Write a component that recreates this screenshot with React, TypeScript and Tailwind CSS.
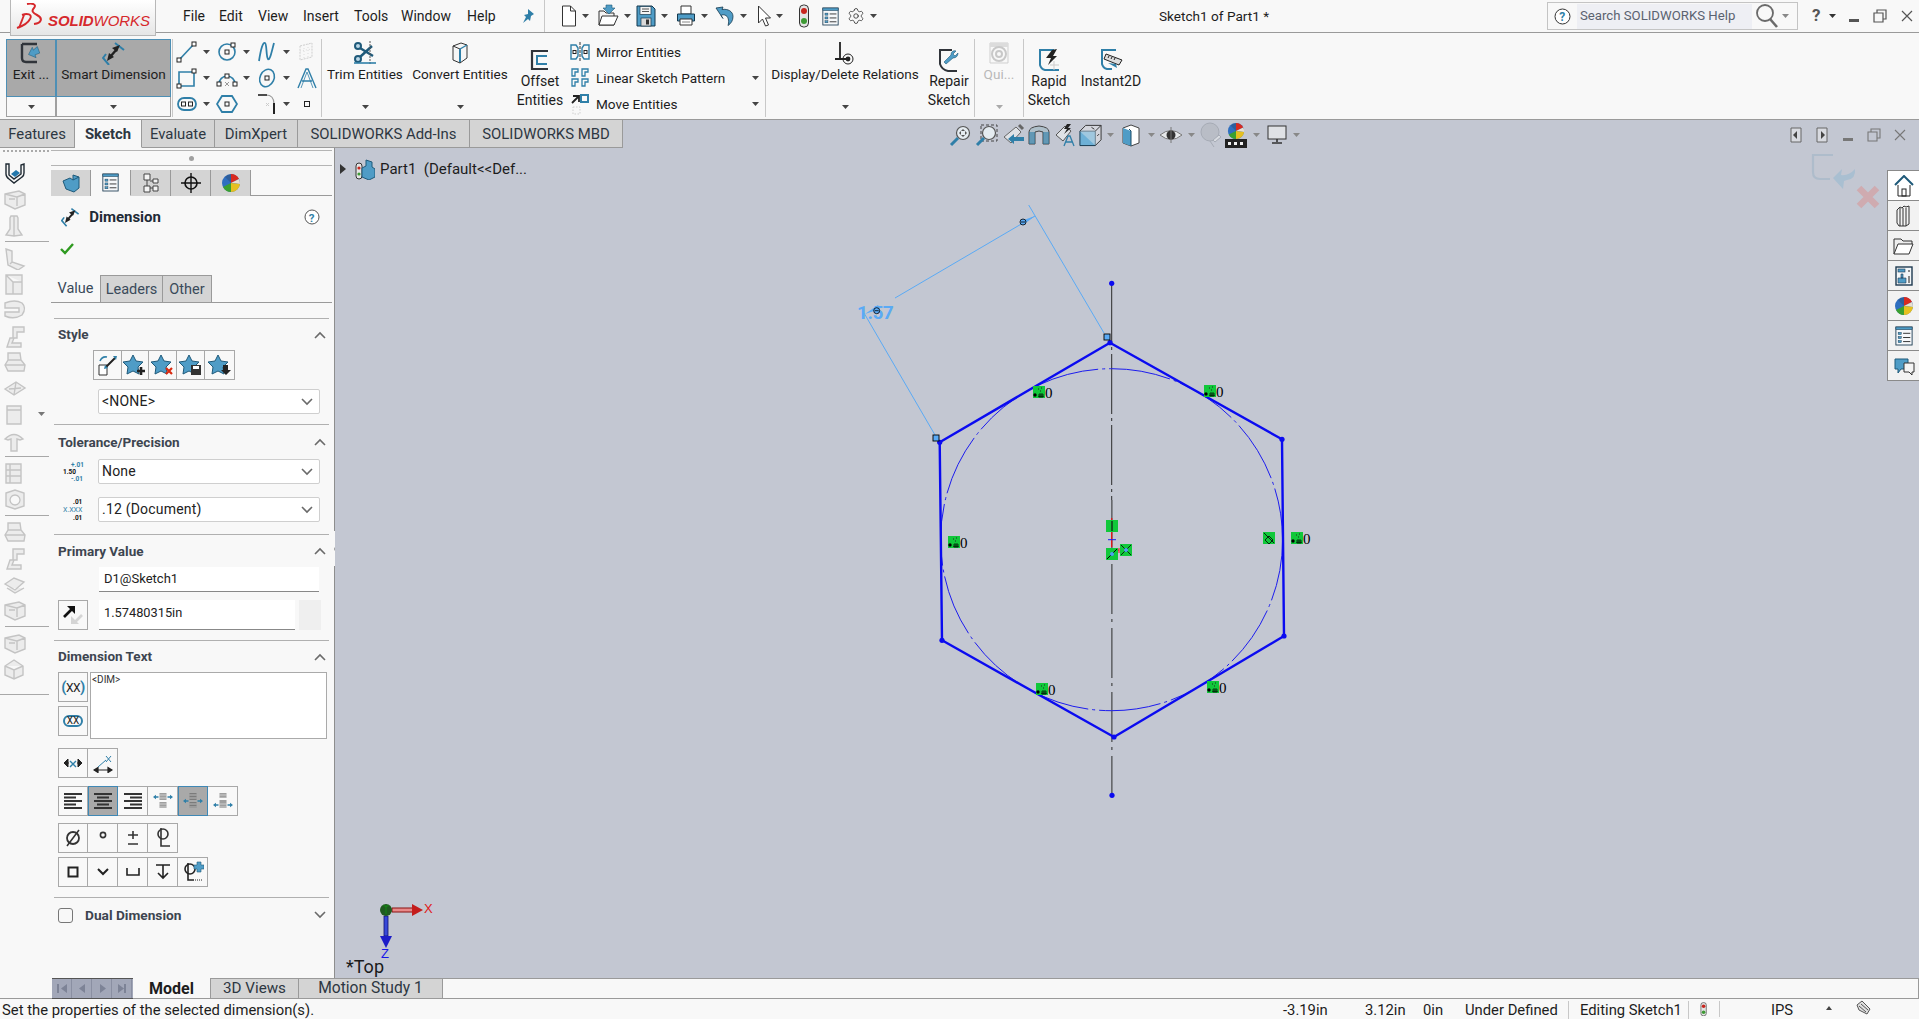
import React from "react";
import { Settings } from "lucide-react";

type SP = { w?: number; h?: number; children?: React.ReactNode; className?: string };
const S = ({ w = 24, h = 24, children, className }: SP) => (
  <svg width={w} height={h} viewBox={`0 0 ${w} ${h}`} fill="none" className={className}>{children}</svg>
);
const B = "#2f7fa8", LB = "#4f9cc6";
const Caret = ({ c = "#444" }: { c?: string }) => <S w={7} h={4}><path d="M0 0h7L3.5 4z" fill={c} /></S>;
const Chevron = ({ up = false }: { up?: boolean }) => (
  <S w={12} h={8}><path d={up ? "M1 7l5-5 5 5" : "M1 1l5 5 5-5"} stroke="#6a6a6a" strokeWidth="1.6" /></S>
);
const Ball = ({ s = 20 }: { s?: number }) => (
  <svg width={s} height={s} viewBox="0 0 20 20">
    <circle cx="10" cy="10" r="9" fill="#2f6fc0" />
    <path d="M10 1a9 9 0 0 1 8 5l-8 4z" fill="#d82a20" />
    <path d="M18 6a9 9 0 0 1 1 5l-9-1z" fill="#e8e0d0" />
    <path d="M19 11a9 9 0 0 1-9 8v-9z" fill="#e6c020" />
    <path d="M10 19a9 9 0 0 1-8-5l8-4z" fill="#3aa030" />
    <path d="M10 1a9 9 0 0 0-6 3l6 6z" fill="#2a2a2a" opacity=".25" />
  </svg>
);
const Traffic = ({ s = 1 }: { s?: number }) => (
  <svg width={12 * s} height={24 * s} viewBox="0 0 12 24">
    <rect x="1.5" y="1" width="9" height="22" rx="4" fill="#e4e4e4" stroke="#333" />
    <circle cx="6" cy="7" r="3" fill="#c8261e" />
    <circle cx="6" cy="17" r="3" fill="#3d9a34" />
  </svg>
);
const ListIc = ({ s = 20 }: { s?: number }) => (
  <svg width={s} height={s + 2} viewBox="0 0 20 22" fill="none">
    <rect x="1" y="1" width="18" height="20" fill="#f6f8fa" stroke="#1b3a50" />
    <rect x="1" y="1" width="18" height="3" fill={LB} stroke="#1b3a50" strokeWidth=".6" />
    <rect x="3.5" y="7" width="3.5" height="2.4" fill={LB} stroke="#1b3a50" strokeWidth=".5" />
    <rect x="3.5" y="11.5" width="3.5" height="2.4" fill={LB} stroke="#1b3a50" strokeWidth=".5" />
    <rect x="3.5" y="16" width="3.5" height="2.4" fill={LB} stroke="#1b3a50" strokeWidth=".5" />
    <path d="M9 8h8M9 12.7h8M9 17.2h8" stroke="#222" />
  </svg>
);

/* ---------- logo ---------- */
const DsLogo = () => (
  <S w={29} h={27}>
    <path d="M6 12C11 10 17 11 14 16 12 20 7 23 1 25" stroke="#d6282c" strokeWidth="1.9" />
    <path d="M8 12L3 25" stroke="#d6282c" strokeWidth="1.9" />
    <path d="M11 1C16 0 21 1 18 5 15 8 17 10 21 12 27 15 26 20 18 21" stroke="#d6282c" strokeWidth="2" />
  </S>
);

/* ---------- quick access toolbar ---------- */
const NewIc = () => <S w={16} h={24}><path d="M1.5 2h8l5 5v15h-13z" fill="#fff" stroke="#333" /><path d="M9.5 2v5h5" stroke="#333" /></S>;
const OpenIc = () => <S w={22} h={24}><path d="M2 21V7h5l2 2h8v12z" fill="#f4f4f4" stroke="#333" /><path d="M2 21l3-9h16l-4 9z" fill="#fff" stroke="#333" /><path d="M9 1l6 0v3h3l-6 6-6-6h3z" fill={LB} stroke="#1f5a7a" strokeWidth=".6" /></S>;
const SaveIc = () => <S w={20} h={22}><path d="M1 1h15l3 3v17H1z" fill={LB} stroke="#14384e" /><rect x="4" y="1.5" width="11" height="8" fill="#f4f4f4" stroke="#14384e" strokeWidth=".7" /><path d="M6 4h7M6 6.5h7" stroke="#555" /><rect x="5" y="13" width="10" height="8" fill="#d9d9d9" stroke="#14384e" strokeWidth=".7" /><rect x="10" y="14.5" width="3" height="5" fill="#333" /></S>;
const PrintIc = () => <S w={20} h={22}><path d="M5 1h10v8H5z" fill="#fff" stroke="#333" /><path d="M1.5 9h17v7h-17z" fill={LB} stroke="#14384e" /><path d="M4 14h12v6H4z" fill="#fff" stroke="#333" /><path d="M6 17h8" stroke="#888" /></S>;
const UndoIc = () => <S w={20} h={22}><path d="M1 3l7-1-1 2.5c6-1 11 2 11 7 0 4-2 7-5 9 1-3 1-8-2-10-2-1-4-1-5 0l2 3z" fill={LB} stroke="#14384e" strokeWidth=".8" /></S>;
const CursorIc = () => <S w={14} h={22}><path d="M1.5 1v17l4-4 3 7 3-1-3-7h5z" fill="#fff" stroke="#333" /></S>;

/* ---------- command manager icons ---------- */
const ExitIc = () => <S w={22} h={24}><path d="M2 3h15M2 3v14q0 4 4 4h11" stroke="#30343a" strokeWidth="2.4" /><path d="M19 7v7h-5v3l-6-5.5L14 6v3z" fill={LB} stroke="#1f5a7a" strokeWidth=".5" transform="rotate(-20 14 11)" /></S>;
const SmartDim = ({ s = 1 }: { s?: number }) => (
  <svg width={24 * s} height={24 * s} viewBox="0 0 24 24" fill="none">
    <path d="M4 13l-3 4 6 7M13 2l9 7" stroke={B} strokeWidth="2" />
    <path d="M8 16l7-8" stroke="#222" strokeWidth="2.4" />
    <path d="M5 20l2-8 5 4zM18 4l-8 3 5 4z" fill="#222" />
  </svg>
);
const LineIc = () => <S w={22} h={24}><path d="M3 20L18 4" stroke={B} strokeWidth="1.6" /><rect x="1" y="18" width="4" height="4" fill="#fff" stroke="#222" /><rect x="16" y="2" width="4" height="4" fill="#fff" stroke="#222" /></S>;
const CircleIc = () => <S w={22} h={24}><circle cx="11" cy="12" r="8" stroke={B} strokeWidth="1.6" /><rect x="9" y="10" width="4" height="4" stroke="#222" /><rect x="15" y="3" width="4" height="4" fill="#fff" stroke="#222" /></S>;
const SplineIc = () => <S w={22} h={24}><path d="M3 21C5 8 7 2 9 3s1 14 3 16S16 10 18 3" stroke={B} strokeWidth="1.8" /></S>;
const GhostIc = () => <S w={22} h={24}><path d="M4 6l12-3v14L4 20z" stroke="#cfcfcf" strokeDasharray="2 1" /><path d="M8 5v14M12 4v14M4 11l12-2" stroke="#dcdcdc" strokeDasharray="1 2" /></S>;
const RectIc = () => <S w={22} h={24}><path d="M3 6h15v14H3z" stroke={B} strokeWidth="1.6" /><rect x="16" y="3" width="4" height="4" fill="#fff" stroke="#222" /><rect x="1" y="18" width="4" height="4" fill="#fff" stroke="#222" /></S>;
const ArcIc = () => <S w={22} h={24}><path d="M3 18a8 8 0 0 1 16 0" stroke={B} strokeWidth="1.6" /><rect x="1" y="16" width="4" height="4" fill="#fff" stroke="#222" /><rect x="17" y="16" width="4" height="4" fill="#fff" stroke="#222" /><rect x="9" y="8" width="4" height="4" fill="#fff" stroke="#222" /><path d="M9 16l4 4M13 16l-4 4" stroke="#999" /></S>;
const EllipseIc = () => <S w={22} h={24}><ellipse cx="11" cy="12" rx="7" ry="9" stroke={B} strokeWidth="1.6" transform="rotate(25 11 12)" /><rect x="9" y="10" width="4" height="4" stroke="#222" /></S>;
const TextIc = () => <S w={22} h={24}><path d="M2 22L10 3h2l8 19M6 15h10" stroke={B} strokeWidth="1.4" /><path d="M5 22L11 6l6 16" stroke={B} strokeWidth=".8" /></S>;
const SlotIc = () => <S w={22} h={24}><rect x="2" y="6" width="18" height="12" rx="6" stroke={B} strokeWidth="1.8" /><rect x="5.5" y="10" width="4" height="4" stroke="#222" /><rect x="12.5" y="10" width="4" height="4" stroke="#222" /></S>;
const PolyIc = () => <S w={22} h={24}><path d="M6 4h10l5 8-5 8H6l-5-8z" stroke={B} strokeWidth="1.8" /><rect x="9" y="10" width="4" height="4" stroke="#222" /></S>;
const FilletIc = () => <S w={22} h={24}><path d="M2 3h8q8 0 8 9" stroke="#999" strokeWidth="1.2" /><path d="M18 11v11" stroke="#222" strokeWidth="2" /><path d="M2 3h9" stroke="#222" strokeWidth="1.5" /><path d="M10 11l3 3M13 11l-3 3" stroke="#ccc" /></S>;
const TrimIc = () => <S w={24} h={26}><circle cx="5" cy="6" r="3" stroke="#1f5a7a" strokeWidth="2" fill="#bcd8e8" /><circle cx="5" cy="19" r="3" stroke="#1f5a7a" strokeWidth="2" fill="#bcd8e8" /><path d="M7 8l13 8M7 17L19 6" stroke="#1f5a7a" strokeWidth="2.4" /><path d="M17 1v24" stroke="#555" strokeDasharray="2 1" /><path d="M1 23h22" stroke={B} strokeWidth="1.6" /></S>;
const ConvertIc = () => <S w={20} h={24}><path d="M3 5l8-3 6 2v13l-7 5-7-3z" fill="#f6f6f6" stroke="#333" /><path d="M3 5l7 3v14" stroke="#333" /><path d="M10 8l7-4" stroke={B} strokeWidth="1.4" /><path d="M10 8v13" stroke={B} strokeWidth="2" /></S>;
const OffsetIc = () => <S w={20} h={24}><path d="M18 3H2v18h16" stroke="#30343a" strokeWidth="2.2" /><path d="M17 8H7v8h10" stroke={B} strokeWidth="2" /></S>;
const MirrorIc = () => <S w={20} h={20}><path d="M10 0v20" stroke="#333" strokeDasharray="3 1" /><path d="M1 3h5l2 3v8l-2 3H1zM19 3h-5l-2 3v8l2 3h5z" stroke={B} strokeWidth="1.4" /><rect x="3" y="8.5" width="3" height="3" fill="#fff" stroke="#222" /><rect x="14" y="8.5" width="3" height="3" fill="#fff" stroke="#222" /></S>;
const LinearIc = () => <S w={20} h={20}><path d="M2 1h6v3H5v4H2zM12 1h6v3h-3v4h-3zM2 11h6v3H5v4H2zM12 11h6v3h-3v4h-3z" stroke={B} strokeWidth="1.3" /></S>;
const MoveIc = () => <S w={20} h={22}><path d="M2 10l6-6M3 3h6v6" stroke="#222" strokeWidth="1.8" /><rect x="11" y="2" width="7" height="7" stroke={B} strokeWidth="2" /><rect x="3" y="14" width="7" height="7" stroke="#cfcfcf" strokeDasharray="1.5 1.5" /></S>;
const DisplayIc = () => <S w={24} h={26}><path d="M7 2v17M2 19h13" stroke="#222" strokeWidth="1.8" /><circle cx="15" cy="19" r="5" stroke="#222" /><circle cx="15" cy="19" r="2.4" fill="#222" /></S>;
const RepairIc = () => <S w={24} h={26}><path d="M15 3H3v14q2 6 8 7h9" stroke="#30343a" strokeWidth="2" /><path d="M21 6l-3 3-2-2 3-3c-3-1-5 1-5 4L7 15l2 2 7-6c3 0 5-2 5-5z" fill={LB} stroke="#1f5a7a" strokeWidth=".6" /></S>;
const QuickIc = () => <S w={22} h={26}><path d="M2 3h18v20H2z" stroke="#cfcfcf" /><path d="M2 3h18v4H2z" fill="#dcdcdc" /><circle cx="11" cy="14" r="7" stroke="#c8c8c8" strokeWidth="2" /><circle cx="11" cy="14" r="3" stroke="#c8c8c8" strokeWidth="2" /></S>;
const RapidIc = () => <S w={24} h={26}><path d="M17 3H3v15q1 4 5 5h14" stroke={B} strokeWidth="2" /><path d="M15 3l5-1-4 7h4l-9 9 3-7H9z" fill="#222" /><path d="M13 18h9M17 14v9" stroke="#ccc" /></S>;
const InstantIc = () => <S w={24} h={26}><path d="M17 3H3v14q1 4 5 5h5" stroke={B} strokeWidth="2" /><path d="M7 7l16 6-3 5L5 12z" fill="#ddd" stroke="#222" /><path d="M10 9l-1 2M13 10l-1 2M16 11l-1 2" stroke="#222" /><path d="M9 16l9 5-1-4z" fill={B} /></S>;

/* ---------- heads-up toolbar ---------- */
const Mag = ({ dash }: { dash?: boolean }) => (
  <S w={24} h={24}>
    {dash && <rect x="6" y="2" width="16" height="16" stroke="#444" strokeDasharray="3 2" />}
    <circle cx="14" cy="10" r="6.5" fill="#e4ebf0" stroke="#555" strokeWidth="1.2" />
    {!dash && <path d="M14 6l2 2h-4zM14 14l2-2h-4zM10 10l2-2v4zM18 10l-2-2v4z" fill="#555" />}
    <path d="M9 15l-7 7" stroke={B} strokeWidth="3" />
  </S>
);
const PrevIc = () => <S w={24} h={24}><path d="M3 14L15 4l5 5-10 11z" fill="#dfe2e6" stroke="#666" /><path d="M18 2l4 4" stroke="#666" strokeWidth="3" /><path d="M23 18H13v3l-6-5 6-5v3h10z" fill={B} /></S>;
const SectIc = () => <S w={24} h={24}><path d="M2 9q0-5 10-6 10 1 10 6v12H16V9q-4-2-8 0v12H2z" fill="#aebfc9" stroke="#444" /><path d="M2 9h6v12H2zM16 9h6v12h-6z" fill={B} opacity=".6" /></S>;
const DynIc = () => <S w={24} h={24}><path d="M3 12L12 3l6 5-8 10z" fill="#dfe2e6" stroke="#555" /><path d="M14 1l-3 5h3l-3 5 7-6h-3l3-4z" fill="#222" /><path d="M11 23l4-10h2l4 10M13 19h6" stroke={B} strokeWidth="1.3" /></S>;
const CubeIc = () => <S w={26} h={24}><path d="M2 8h16v15H2z" fill="#6db0d6" stroke="#14384e" /><path d="M2 8l6-6h16v15l-6 6" stroke="#333" fill="#eee" fillOpacity=".4" /><path d="M18 8l6-6M14 4l3 2M20 13l2-2" stroke="#333" /></S>;
const DispIc = () => <S w={20} h={24}><path d="M2 5l8-3 8 3v15l-8 3-8-3z" fill="#fff" stroke="#444" /><path d="M2 5l8 3v15l-8-3z" fill="#4f9cc6" /><path d="M8 6l2 2v15" stroke="#1b4a66" /></S>;
const EyeIc = () => <S w={24} h={22}><path d="M1 11q11-9 22 0-11 9-22 0z" fill="#e6e8ea" stroke="#777" /><circle cx="12" cy="11" r="4.5" fill="#333" /><path d="M12 3v16" stroke="#777" /></S>;
const BalloonIc = () => <S w={24} h={26}><circle cx="11" cy="10" r="9" fill="#b9bdc6" stroke="#a6abb5" /><path d="M11 19l4 6" stroke="#a6abb5" /><path d="M14 18l6-5 2 2-6 5z" fill="#d8dbe0" stroke="#a6abb5" /></S>;
const SceneIc = () => (
  <S w={22} h={26}>
    <g transform="translate(2 0)"><Ball s={18} /></g>
    <path d="M0 17h22v9H0z" fill="#222" />
    <path d="M3 20h3v3H3zM9 20h3v3H9zM15 20h3v3h-3z" fill="#f2f2f2" />
  </S>
);
const Monitor = () => <S w={20} h={20}><rect x="1" y="1" width="18" height="13" fill="#dfe1e5" stroke="#333" /><path d="M10 14v3M5 18h10" stroke="#333" strokeWidth="1.6" /></S>;

/* ---------- left feature bar ---------- */
const gs = { stroke: "#c4c4c4", fill: "#ececec", strokeWidth: 1.4 };
const FP: Record<string, string> = {
  a: "M3 7l14-3 6 3v11l-10 4-10-5z M3 7l12 3v9 M7 12h6M15 10l8-3",
  b: "M9 3h6l1 2v11l4 6-8 1-8-1 4-6V5z M12 3v20",
  c: "M4 3l6 2v11l12 4-6 4-10-5z M10 16l-2 2",
  d: "M4 3h16v19H4z M4 3l7 7h9 M11 10v12",
  e: "M3 5q10-4 17 0q5 5 0 12q-8 5-17 1v-4h14v-4H3z",
  f: "M11 3h11v5h-7v6h-3l-2 5h9v4H5l3-9h3z",
  g: "M3 13l11-7 9 6-11 7z M7 13l12-1 M14 6l-2 13",
  h: "M6 3h12l1 7 4 5-1 6H6l-3-6 3-5z M6 10h13 M3 15h20",
  i: "M3 11q9-9 18 0l-3 1-3-1v12H9V11l-3 1z",
  j: "M4 3h15v19H4z M8 3v19M4 9h15M4 15h15",
  k: "M4 6l9-3 9 3v13l-9 3-9-3z M13 8a5 5 0 1 0 .01 0",
  l: "M3 12l9-6 10 4-9 8z M5 16l8 5 9-5",
  m: "M12 3l9 6v9l-9 4-9-4V9z M3 9l9 4 9-4 M12 13v9",
  n: "M5 4h14v18H5z M5 8h14",
};
const Feat = ({ k, first }: { k: string; first?: boolean }) =>
  first ? (
    <S w={24} h={24}>
      <path d="M3 3v10q0 3 3 5l5 4 8-6q2-1 2-4V3l-3 1v9l-7 5-5-4V3z" fill="#f6f6f6" stroke="#1f2a33" strokeWidth="1.4" />
      <path d="M13 9l4 3-5 4-4-3z" fill="#2478ac" />
    </S>
  ) : (
    <S w={26} h={24}><path d={FP[k]} {...gs} /></S>
  );
const lefts: (string | number)[] = ["a0", "a", "b", 0, "c", "d", "e", "f", "h", "g", "n", "i", 0, "j", "k", 0, "h", "f", "l", "a", 0, "a", "m", 0];

/* ---------- small blocks ---------- */
const Label = ({ t, lh = 19 }: { t: string[]; lh?: number }) => (
  <div className="text-center text-[14px]" style={{ lineHeight: lh + "px" }}>{t.map((x) => <div key={x} className="whitespace-nowrap">{x}</div>)}</div>
);
const Big1 = ({ w, icon, t, gray }: { w: string; icon: React.ReactNode; t: string; gray?: boolean }) => (
  <div className={`${w} h-[78px] flex flex-col items-center`}>
    <div className="h-[27px] flex items-center justify-center">{icon}</div>
    <div className={`h-[17px] leading-[17px] whitespace-nowrap ${gray ? "text-[#b8b8b8]" : ""}`}>{t}</div>
    <div className="mt-auto mb-[8px] flex"><Caret c={gray ? "#aaa" : "#444"} /></div>
  </div>
);
const Big2 = ({ w, icon, t }: { w: string; icon: React.ReactNode; t: string[] }) => (
  <div className={`${w} h-[78px] flex flex-col items-center`}>
    <div className="h-[33px] pt-[9px] flex items-center justify-center">{icon}</div>
    <Label t={t} />
  </div>
);
const VSep = () => <div className="w-px h-[78px] bg-[#c8c8c8] shrink-0" />;
const Cell = ({ icon, caret = true, w = "w-[40px]" }: { icon: React.ReactNode; caret?: boolean; w?: string }) => (
  <div className={`${w} h-[26px] flex items-center`}>
    <div className="w-[22px] flex justify-center">{icon}</div>
    {caret && <div className="ml-[5px] flex"><Caret /></div>}
  </div>
);
const Qa = ({ icon, w }: { icon: React.ReactNode; w: string }) => (
  <div className={`${w} flex items-center`}>{icon}<span className="ml-[5px] flex"><Caret /></span></div>
);
const Tab = ({ t, w, active }: { t: string; w: string; active?: boolean }) => (
  <div className={`${w} h-[28px] pt-[2px] flex items-center justify-center border-r border-b border-[#9a9a9a] whitespace-nowrap text-[14.9px] text-[#2d3742] ${active ? "bg-[#f8f8f8] font-bold border-b-[#f8f8f8]" : "bg-[#d4d4d4]"}`}>{t}</div>
);
const Hud = ({ icon, w = "w-[26px]" }: { icon: React.ReactNode; w?: string }) => <div className={`${w} flex justify-center items-center`}>{icon}</div>;
const Select = ({ t, w = "ml-[40px]" }: { t: string; w?: string }) => (
  <div className={`${w} w-[222px] h-[25px] bg-white border border-[#cfcfcf] rounded-[2px] flex items-center justify-between pl-[3px] pr-[6px] text-[14px] text-[#222]`}>
    <span className="tracking-[0.2px]">{t}</span><Chevron />
  </div>
);
const SecHead = ({ t, h }: { t: string; h: string }) => (
  <div className={`${h} flex items-center justify-between pl-[4px] pr-[3px]`}>
    <span className="font-bold text-[13.5px] text-[#3d4550]">{t}</span><Chevron up />
  </div>
);
const Sec = ({ children }: { children: React.ReactNode }) => <div className="ml-[3px] w-[275px] border-t border-[#b0b0b0]">{children}</div>;
const Sq = ({ children, on, first, w = "w-[30px]" }: { children?: React.ReactNode; on?: boolean; first?: boolean; w?: string }) => (
  <div className={`${w} h-[30px] flex items-center justify-center ${on ? "bg-[#a9a9a9] border border-[#3f88b5]" : `bg-[#f8f8f8] border border-[#a8a8a8] ${first ? "" : "border-l-0"}`}`}>{children}</div>
);
const Star = ({ extra }: { extra?: React.ReactNode }) => (
  <S w={24} h={22}>
    <path d="M10 1l3 6 7 1-5 5 1 7-6-3-6 3 1-7-5-5 7-1z" fill={LB} stroke="#1f5a7a" />
    {extra}
  </S>
);
const Lines = ({ a }: { a: "l" | "c" | "r" }) => {
  const rows = [18, 12, 18, 12, 18];
  return (
    <S w={20} h={18}>
      {rows.map((w, i) => {
        const x = a === "l" ? 1 : a === "r" ? 19 - w : 10 - w / 2;
        return <rect key={i} x={x} y={1 + i * 3.5} width={w} height="2" fill="#333" />;
      })}
    </S>
  );
};
const XBlock = ({ kind }: { kind: number }) => {
  const y = kind === 0 ? 5 : kind === 1 ? 9 : 13;
  return (
    <S w={20} h={18}>
      <rect x="6.5" y="1" width="7" height={kind === 2 ? 5 : 7} fill="#555" opacity=".55" />
      <rect x="6.5" y={kind === 2 ? 8 : 10} width="7" height={kind === 2 ? 8 : 6} fill="#555" opacity=".55" />
      <path d="M6.5 3h7M6.5 6h7M6.5 12h7M6.5 15h7" stroke="#fff" strokeWidth=".5" />
      <path d={`M2.5 ${y}h3M14.5 ${y}h3`} stroke={B} strokeWidth="1.3" />
      <path d={`M3 ${y - 2.2}L0 ${y}l3 2.2zM17 ${y - 2.2}l3 2.2-3 2.2z`} fill={B} />
    </S>
  );
};

const Rel = ({ x, y, zero = true, dark }: { x: number; y: number; zero?: boolean; dark?: boolean }) => (
  <g transform={`translate(${x} ${y})`}>
    <rect width="12" height="12" fill="#10c83a" />
    {!dark && <>
      <circle cx="2" cy="9" r="1.7" fill="#000" />
      <path d="M5 9h6M5 10.6h6M7 7v5M9 7v5" stroke="#000" strokeWidth=".7" />
      <path d="M5 3h1M8 2h1M7 5h1" stroke="#222" />
    </>}
    {zero && <text x="12" y="12" fontSize="15" fontFamily="Liberation Serif,serif" fill="#000">0</text>}
  </g>
);
const Handle = ({ x, y }: { x: number; y: number }) => (
  <g><circle cx={x} cy={y} r="3" fill="#5aaaf5" stroke="#000" strokeWidth=".8" /><path d={`M${x - 2} ${y}h4`} stroke="#000" strokeWidth=".8" /></g>
);
const HexPts = "1109,342.7 1281,439.3 1283,636 1113,737 941,640.3 938.7,442.3";

const Canvas = () => (
  <svg className="absolute inset-0" width="1585" height="830" viewBox="334 148 1585 830" fill="none">
    {/* confirmation corner */}
    <path d="M1832 155h-20v17q0 7 7 7h10" stroke="#aebccb" strokeWidth="2.2" />
    <path d="M1854 169q1 10-8 11l-3 1-1 8-10-11 9-9-1 6q8 1 14-6z" fill="#a9bfd1" />
    <path d="M1858 188l18 18M1876 188l-18 18" stroke="#cfabb0" strokeWidth="6.5" />
    {/* centre line */}
    <path d="M1110.7 283V500" stroke="#2b2b2b" strokeWidth="1" strokeDasharray="60 4 3 4" />
    <path d="M1110.9 500V795" stroke="#2b2b2b" strokeWidth="1" strokeDasharray="50 5 3 6" />
    {/* circle */}
    <circle cx="1110.6" cy="539.7" r="171" stroke="#1c1cee" strokeWidth="1" strokeDasharray="62 4 3 4" />
    {/* hex */}
    <polygon points={HexPts} stroke="#0b0bf0" strokeWidth="2.4" strokeLinejoin="round" />
    {HexPts.split(" ").map((p) => { const [x, y] = p.split(","); return <circle key={p} cx={x} cy={y} r="2.6" fill="#0b0bf0" />; })}
    <circle cx="1110.7" cy="283.3" r="2.6" fill="#0b0bf0" />
    <circle cx="1111" cy="795.3" r="2.6" fill="#0b0bf0" />
    {/* origin */}
    <path d="M1110.7 518V547" stroke="#f01010" strokeWidth="1.2" />
    <path d="M1107 539.7h8" stroke="#1c1cee" />
    <path d="M1113 551l5-1M1118 548v5" stroke="#f01010" strokeWidth="1" />
    {/* dimension */}
    <g stroke="#5aaaf5" strokeWidth="1">
      <path d="M1027.7 205L1103 333" />
      <path d="M863 313L934 435" />
      <path d="M1034 216L894 298" />
    </g>
    <path d="M1034 216l-14 5 2 4z" fill="#5aaaf5" />
    <text x="856" y="319" fontSize="19" fontWeight="700" fontFamily="Roboto,sans-serif" fill="#5aaaf5" letterSpacing="-.5">1.57</text>
    <path d="M864 314l13-9 2 4z" fill="#5aaaf5" />
    <Handle x={1022} y={222} />
    <Handle x={875.7} y={310.7} />
    <rect x="1103" y="334" width="6" height="6" fill="#5aaaf5" stroke="#000" strokeWidth=".9" />
    <rect x="932" y="435" width="6" height="6" fill="#5aaaf5" stroke="#000" strokeWidth=".9" />
    {/* relations */}
    <Rel x={1032} y={386} /><Rel x={1203} y={385} /><Rel x={947} y={536} /><Rel x={1035} y={683} /><Rel x={1206} y={681} /><Rel x={1290} y={532} />
    <Rel x={1262} y={532} zero={false} dark /><path d="M1263 533l10 10M1268 536l-4 4 4 4 4-4z" stroke="#000" strokeWidth=".8" />
    <Rel x={1105} y={520} zero={false} dark /><path d="M1111 521v10" stroke="#111" strokeWidth="1.2" />
    <Rel x={1105} y={548} zero={false} dark /><path d="M1106 559l10-10" stroke="#000" /><circle cx="1111" cy="554" r="2" fill="#4aa0f0" />
    <Rel x={1119} y={544} zero={false} dark /><path d="M1120 545l10 10M1120 555l10-10" stroke="#000" strokeWidth=".8" /><circle cx="1125" cy="550" r="2" fill="#4aa0f0" />
    {/* triad */}
    <path d="M391 908h21v4h-21z" fill="#e88a8a" stroke="#8a1010" strokeWidth="1" />
    <path d="M411 904l11 6-11 6z" fill="#c41c1c" />
    <path d="M383 916h4v20h-4z" fill="#3848d8" stroke="#101070" strokeWidth=".8" />
    <path d="M379 936h12l-6 12z" fill="#1c1cc8" />
    <circle cx="385" cy="910" r="6" fill="#1f5a1f" />
    <path d="M385 905v9M382 905l3 2 3-2" stroke="#0e9a0e" strokeWidth=".7" />
    <text x="423" y="913" fontSize="13" fontFamily="Liberation Sans,sans-serif" fill="#e01818">X</text>
    <text x="380" y="958" fontSize="13" fontFamily="Liberation Sans,sans-serif" fill="#1818e8">Z</text>
    <text x="345" y="973" fontSize="18" fontFamily="Roboto,sans-serif" fill="#1a1a1a">*Top</text>
  </svg>
);

const Pane = ({ children, on }: { children: React.ReactNode; on?: boolean }) => (
  <div className={`h-[30px] flex items-center justify-center border-b border-[#8a8a8a] ${on ? "bg-white" : "bg-[#f2f2f2]"}`}>{children}</div>
);

export default function App() {
  return (
    <div className="w-[1919px] h-[1019px] overflow-hidden flex flex-col bg-[#f8f8f8] text-[13.6px] text-[#1d1d1d] [font-family:Roboto,sans-serif]">
      {/* title bar */}
      <div className="h-[33px] shrink-0 border-b border-[#9a9a9a] flex items-start relative">
        <div className="ml-[10px] w-[146px] h-[37px] -mt-px z-10 shrink-0 border border-[#b8b8b8] bg-gradient-to-b from-white to-[#e6e6e6] flex items-start pl-[5px] pt-[3px]">
          <DsLogo />
          <span className="ml-[3px] mt-[10px] text-[15px] leading-[16px] tracking-[-0.05px] text-[#d6282c] italic [font-family:'Liberation_Sans',sans-serif] whitespace-nowrap"><b>SOLID</b>WORKS</span>
        </div>
        <div className="h-[32px] flex items-center ml-[27px] text-[14px]">
          {[["File", "w-[36px]"], ["Edit", "w-[39px]"], ["View", "w-[45px]"], ["Insert", "w-[51px]"], ["Tools", "w-[47px]"], ["Window", "w-[66px]"], ["Help", "w-[54px]"]].map(([t, w]) => <span key={t} className={w}>{t}</span>)}
          <S w={14} h={16}><path d="M7 1l6 5-3 2-1 5-2-2-5 4 3-6-2-2 4-1z" fill={B} /></S>
        </div>
        <div className="h-[32px] w-px bg-[#c8c8c8] ml-[9px]" />
        <div className="h-[32px] flex items-center ml-[16px]">
          <Qa w="w-[36px]" icon={<NewIc />} />
          <Qa w="w-[39px]" icon={<OpenIc />} />
          <Qa w="w-[40px]" icon={<SaveIc />} />
          <Qa w="w-[39px]" icon={<PrintIc />} />
          <Qa w="w-[42px]" icon={<UndoIc />} />
          <Qa w="w-[41px]" icon={<CursorIc />} />
          <div className="w-[24px] flex"><Traffic /></div>
          <div className="w-[25px] flex"><ListIc s={17} /></div>
          <div className="flex items-center"><Settings size={18} strokeWidth={1} color="#222" /><span className="ml-[5px] flex"><Caret /></span></div>
        </div>
        <div className="h-[32px] flex items-center ml-[282px] whitespace-nowrap w-[388px]">Sketch1 of Part1 *</div>
        <div className="w-[251px] h-[28px] mt-[2px] border border-[#c4c4c4] flex items-center">
          <div className="w-[29px] flex justify-center">
            <S w={17} h={17}><circle cx="8.5" cy="8.5" r="7.5" fill="#fff" stroke="#333" /><text x="5.3" y="13" fontSize="12" fontWeight="700" fill={B} fontFamily="Roboto,sans-serif">?</text></S>
          </div>
          <div className="w-[175px] h-[25px] bg-[#eeeff4] text-[#5a6270] text-[13.2px] flex items-center pl-[3px] whitespace-nowrap">Search SOLIDWORKS Help</div>
          <div className="w-[30px] flex justify-center"><S w={24} h={26}><circle cx="10" cy="10" r="8" stroke="#6a6a6a" strokeWidth="1.8" /><path d="M15 16l7 8" stroke="#6a6a6a" strokeWidth="2.6" /></S></div>
          <Caret c="#888" />
        </div>
        <div className="h-[32px] flex items-center">
          <span className="ml-[14px] font-bold text-[17px] text-[#555]">?</span>
          <span className="ml-[9px] flex"><Caret c="#333" /></span>
          <div className="ml-[13px] w-[10px] h-[3px] mt-[8px] bg-[#555]" />
          <S w={14} h={14} className="ml-[14px]"><path d="M1 4h9v9H1zM4 4V1h9v9h-3" stroke="#555" strokeWidth="1.2" /></S>
          <S w={12} h={12} className="ml-[14px]"><path d="M1 1l10 10M11 1L1 11" stroke="#555" strokeWidth="1.2" /></S>
        </div>
      </div>

      {/* command manager */}
      <div className="h-[87px] shrink-0 border-b border-[#9a9a9a] flex pt-[6px] pl-[6px] items-start">
        {[["Exit ...", "w-[50px]", <ExitIc key="e" />], ["Smart Dimension", "w-[115px]", <SmartDim key="s" />]].map(([t, w, ic]) => (
          <div key={t as string} className={`${w} h-[78px] flex flex-col`}>
            <div className="h-[58px] bg-[#a9a9a9] border border-[#4d8fb5] flex flex-col items-center">
              <div className="h-[25px] flex items-center">{ic}</div>
              <div className="leading-[19px] whitespace-nowrap">{t}</div>
            </div>
            <div className="h-[20px] border border-t-0 border-[#a0a0a0] flex items-center justify-center"><Caret /></div>
          </div>
        ))}
        <div className="w-px h-[78px] bg-[#c8c8c8] ml-[1px] mr-[3px] shrink-0" />
        <div className="w-[144px] grid grid-cols-[40px_40px_40px_24px]">
          <Cell icon={<LineIc />} /><Cell icon={<CircleIc />} /><Cell icon={<SplineIc />} /><Cell icon={<GhostIc />} caret={false} w="w-[24px]" />
          <Cell icon={<RectIc />} /><Cell icon={<ArcIc />} /><Cell icon={<EllipseIc />} /><Cell icon={<TextIc />} caret={false} w="w-[24px]" />
          <Cell icon={<SlotIc />} /><Cell icon={<PolyIc />} caret={false} /><Cell icon={<FilletIc />} />
          <Cell icon={<S w={8} h={8}><rect x="1.5" y="1.5" width="5" height="5" stroke="#222" /></S>} caret={false} w="w-[24px]" />
        </div>
        <div className="w-px h-[78px] bg-[#c8c8c8] ml-[1px] shrink-0" />
        <Big1 w="w-[86px]" icon={<TrimIc />} t="Trim Entities" />
        <Big1 w="w-[104px]" icon={<ConvertIc />} t="Convert Entities" />
        <Big2 w="w-[56px]" icon={<OffsetIc />} t={["Offset", "Entities"]} />
        <div className="w-[197px]">
          {[[<MirrorIc key="m" />, "Mirror Entities", false], [<LinearIc key="l" />, "Linear Sketch Pattern", true], [<MoveIc key="v" />, "Move Entities", true]].map(([ic, t, c]) => (
            <div key={t as string} className="h-[26px] flex items-center">
              <div className="w-[24px] flex justify-center">{ic}</div>
              <span className="ml-[4px] whitespace-nowrap">{t}</span>
              {c && <span className="ml-auto mr-[6px] flex"><Caret /></span>}
            </div>
          ))}
        </div>
        <VSep />
        <Big1 w="w-[158px]" icon={<DisplayIc />} t="Display/Delete Relations" />
        <Big2 w="w-[50px]" icon={<RepairIc />} t={["Repair", "Sketch"]} />
        <VSep />
        <Big1 w="w-[48px]" icon={<QuickIc />} t="Qui..." gray />
        <VSep />
        <Big2 w="w-[50px]" icon={<RapidIc />} t={["Rapid", "Sketch"]} />
        <Big2 w="w-[74px]" icon={<InstantIc />} t={["Instant2D"]} />
      </div>

      {/* tabs + heads-up toolbar */}
      <div className="h-[28px] shrink-0 bg-[#c3c7d2] flex items-center">
        <Tab t="Features" w="w-[75px]" /><Tab t="Sketch" w="w-[67px]" active /><Tab t="Evaluate" w="w-[73px]" /><Tab t="DimXpert" w="w-[83px]" />
        <Tab t="SOLIDWORKS Add-Ins" w="w-[172px]" /><Tab t="SOLIDWORKS MBD" w="w-[153px]" />
        <div className="ml-[325px] flex items-center h-[28px] pt-[2px]">
          <Hud icon={<Mag />} /><Hud icon={<Mag dash />} /><Hud icon={<PrevIc />} /><Hud icon={<SectIc />} /><Hud icon={<DynIc />} /><Hud icon={<CubeIc />} w="w-[25px]" />
          <Hud icon={<Caret c="#888" />} w="w-[14px]" />
          <Hud icon={<DispIc />} w="w-[28px]" />
          <Hud icon={<Caret c="#888" />} w="w-[12px]" />
          <Hud icon={<EyeIc />} w="w-[28px]" />
          <Hud icon={<Caret c="#888" />} w="w-[12px]" />
          <Hud icon={<BalloonIc />} w="w-[28px]" />
          <Hud icon={<SceneIc />} w="w-[22px]" />
          <Hud icon={<Caret c="#888" />} w="w-[18px]" />
          <Hud icon={<Monitor />} w="w-[24px]" />
          <Hud icon={<Caret c="#888" />} w="w-[14px]" />
        </div>
        <div className="ml-auto mr-[6px] flex items-center pt-[2px]">
          <Hud icon={<S w={12} h={16}><path d="M1 1h10v14H1z" stroke="#666" fill="#d8dae0" /><path d="M7 4v8L3 8z" fill="#444" /></S>} />
          <Hud icon={<S w={12} h={16}><path d="M1 1h10v14H1z" stroke="#666" fill="#d8dae0" /><path d="M5 4v8l4-4z" fill="#444" /></S>} />
          <Hud icon={<div className="w-[10px] h-[3px] bg-[#777] mt-[8px]" />} />
          <Hud icon={<S w={14} h={14}><path d="M1 4h9v9H1zM4 4V1h9v9h-3" stroke="#777" strokeWidth="1.1" /></S>} />
          <Hud icon={<S w={12} h={12}><path d="M1 1l10 10M11 1L1 11" stroke="#777" strokeWidth="1.1" /></S>} />
        </div>
      </div>

      {/* body */}
      <div className="h-[830px] shrink-0 flex">
        {/* left panel */}
        <div className="w-[335px] shrink-0 flex border-r border-[#8e8e8e] relative">
          <div className="w-[51px] shrink-0 flex flex-col">
            <div className="h-[12px] flex items-center pl-[3px]"><div className="w-[46px] h-[2px] mt-[-6px] border-t-2 border-dotted border-[#aaa]" /></div>
            {lefts.map((k, i) =>
              k === 0 ? (
                <div key={i} className={`h-px ${i === lefts.length - 1 ? "w-[49px] mt-[12px]" : "ml-[5px] w-[44px] my-[3px]"} bg-[#a8a8a8]`} />
              ) : (
                <div key={i} className="h-[26px] flex items-center">
                  <div className="w-[28px] pl-[1px] flex justify-center"><Feat k={String(k).slice(0, 1)} first={k === "a0"} /></div>
                  {k === "n" && <span className="ml-[10px] flex"><Caret c="#777" /></span>}
                </div>
              )
            )}
          </div>
          <div className="w-[283px] shrink-0">
            <div className="h-[16px] mt-[2px] mr-[2px] border-t border-b border-[#b4b4b4] flex items-center justify-center">
              <div className="w-[5px] h-[5px] rounded-full bg-[#a0a0a0]" />
            </div>
            <div className="h-[26px] mt-[4px] mr-[2px] flex border-b border-[#9a9a9a]">
              {[<S key="1" w={20} h={20}><path d="M2 8l7-3 3 2V2l6 2v11l-5 4-8-3z" fill={LB} stroke="#1f5a7a" /><path d="M12 7l6-3" stroke="#1f5a7a" /></S>, <ListIc key="2" s={17} />, <S key="3" w={18} h={20}><path d="M2 1h6v6H2zM2 13h6v6H2zM11 6h5v4h-5zM11 13h5v5h-5zM8 8h3M8 15h3M5 7v6" stroke="#444" fill="#f4f4f4" /></S>, <S key="4" w={20} h={20}><circle cx="10" cy="10" r="6" stroke="#111" strokeWidth="1.6" /><path d="M10 0v20M0 10h20" stroke="#111" strokeWidth="1.4" /></S>, <Ball key="5" s={20} />].map((ic, i) => (
                <div key={i} className={`w-[40px] h-[26px] flex items-center justify-center border-r border-[#9a9a9a] ${i === 1 ? "bg-[#f8f8f8] border-b border-b-[#f8f8f8]" : "bg-[#d4d4d4]"}`}>{ic}</div>
              ))}
            </div>
            <div className="h-[42px] flex items-center pl-[10px] pr-[14px]">
              <SmartDim s={0.8} />
              <span className="ml-[9px] font-bold text-[15px] text-[#1f2a36]">Dimension</span>
              <S w={16} h={16} className="ml-auto"><circle cx="8" cy="8" r="7" fill="#fff" stroke="#555" /><text x="4.8" y="12.5" fontSize="11.5" fontWeight="700" fill={B} fontFamily="Roboto,sans-serif">?</text></S>
            </div>
            <div className="h-[32px] pl-[9px] pt-[5px]"><S w={14} h={12}><path d="M1 6l4 4 8-9" stroke="#2f9a20" strokeWidth="2.4" /></S></div>
            <div className="h-[28px] mt-[5px] mr-[2px] flex border-b border-[#9a9a9a] text-[14.5px]">
              <div className="w-[49px] pt-[1px] flex items-center justify-center text-[#3a4a5a]">Value</div>
              <div className="w-[63px] pt-[1px] flex items-center justify-center bg-[#d4d4d4] border border-b-0 border-[#9a9a9a] text-[#3a4a5a]">Leaders</div>
              <div className="w-[49px] pt-[1px] flex items-center justify-center bg-[#d4d4d4] border border-b-0 border-l-0 border-[#9a9a9a] text-[#3a4a5a]">Other</div>
            </div>
            <div className="h-[15px]" />
            <Sec>
              <SecHead t="Style" h="h-[31px]" />
              <div className="ml-[39px] flex h-[30px]">
                <Sq first w="w-[29px]"><S w={22} h={22}><path d="M2 11h8v10H2z" fill="#fff" stroke="#333" /><path d="M3 7q2-5 7-4" stroke={B} strokeWidth="1.6" /><path d="M9 13l9-9" stroke="#222" strokeWidth="2" /><path d="M16 2l4 0-1 4zM7 15l1-4 3 3z" fill={B} /></S></Sq>
                <Sq w="w-[27px]"><Star extra={<path d="M14 17h8M18 13v8" stroke="#222" strokeWidth="2.6" />} /></Sq>
                <Sq w="w-[28px]"><Star extra={<path d="M15 14l6 6M21 14l-6 6" stroke="#d82a10" strokeWidth="2.2" />} /></Sq>
                <Sq w="w-[28px]"><Star extra={<g><rect x="12" y="11" width="10" height="10" fill="#333" /><rect x="14" y="12" width="6" height="3" fill="#fff" /></g>} /></Sq>
                <Sq w="w-[30px]"><Star extra={<path d="M15 11h5v5h3l-5 5-5-5h2z" fill="#222" />} /></Sq>
              </div>
              <Select t="<NONE>" w="ml-[44px] mt-[9px]" />
              <div className="h-[10px]" />
            </Sec>
            <Sec>
              <SecHead t="Tolerance/Precision" h="h-[34px]" />
              <div className="flex items-center">
                <svg width="44" height="25" className="shrink-0" viewBox="0 0 44 25">
                  <text x="17" y="8" fontSize="6.5" fontWeight="700" fill={B} fontFamily="Roboto,sans-serif">+.01</text>
                  <text x="9" y="15" fontSize="6.5" fontWeight="700" fill="#111" fontFamily="Roboto,sans-serif">1.50</text>
                  <text x="17" y="22" fontSize="6.5" fontWeight="700" fill={B} fontFamily="Roboto,sans-serif">-.01</text>
                </svg>
                <Select t="None" w="" />
              </div>
              <div className="flex items-center mt-[13px]">
                <svg width="44" height="25" className="shrink-0" viewBox="0 0 44 25">
                  <text x="19" y="7" fontSize="6.5" fontWeight="700" fill="#111" fontFamily="Roboto,sans-serif">.01</text>
                  <text x="9" y="15" fontSize="7" fill={B} fontFamily="Roboto,sans-serif">X.XXX</text>
                  <text x="19" y="23" fontSize="6.5" fontWeight="700" fill="#111" fontFamily="Roboto,sans-serif">.01</text>
                </svg>
                <Select t=".12 (Document)" w="" />
              </div>
              <div className="h-[12px]" />
            </Sec>
            <Sec>
              <SecHead t="Primary Value" h="h-[32px]" />
              <div className="ml-[45px] w-[220px] h-[25px] bg-white border-b border-[#888] flex items-center pl-[5px] text-[13px] text-[#222]">D1@Sketch1</div>
              <div className="mt-[8px] flex h-[30px]">
                <div className="ml-[4px] w-[30px] border border-[#a8a8a8] flex items-center justify-center">
                  <S w={22} h={22}><path d="M2 13l8-8" stroke="#111" strokeWidth="2.6" /><path d="M5 2h8v8z" fill="#111" /><path d="M20 11l-8 8" stroke="#d4d4d4" strokeWidth="2.6" /><path d="M17 20H9v-8z" fill="#d4d4d4" /></S>
                </div>
                <div className="ml-[11px] w-[196px] bg-white border-b border-[#888] flex items-center pl-[5px] pb-[3px] text-[12.8px] text-[#222]">1.57480315in</div>
                <div className="ml-[4px] w-[22px] bg-[#efefef]" />
              </div>
              <div className="h-[10px]" />
            </Sec>
            <Sec>
              <SecHead t="Dimension Text" h="h-[31px]" />
              <div className="flex ml-[4px]">
                <div className="flex flex-col gap-[4px]">
                  <Sq first><span className="text-[12px] tracking-[-0.5px] text-[#222]"><b className="text-[#2f7fa8] text-[15px]">(</b>XX<b className="text-[#2f7fa8] text-[15px]">)</b></span></Sq>
                  <Sq first><div className="w-[20px] h-[12px] rounded-full border-2 border-[#2f7fa8] text-[10px] leading-[8px] text-center text-[#222]">XX</div></Sq>
                </div>
                <div className="ml-[2px] w-[237px] h-[67px] bg-white border border-[#aaa] text-[10px] leading-[14px] pl-[1px] text-[#333]">&lt;DIM&gt;</div>
              </div>
              <div className="ml-[4px] mt-[9px] flex">
                <Sq first><S w={20} h={12}><path d="M5 2v8L1 6zM15 2v8l4-4zM5 6h1M14 6h1" fill="#222" stroke="#222" /><path d="M7 4l6 6M13 4l-6 6" stroke={B} strokeWidth="1.4" /></S></Sq>
                <Sq><S w={20} h={20}><path d="M1 17h18M1 17l4-2.5v5zM19 17l-4-2.5v5z" stroke="#222" strokeWidth="1.2" fill="#222" /><path d="M5 14l8-7" stroke={B} /><path d="M13 3l5 6M18 3l-5 6" stroke={B} /></S></Sq>
              </div>
              <div className="ml-[4px] mt-[8px] flex">
                <Sq first><Lines a="l" /></Sq><Sq on><Lines a="c" /></Sq><Sq><Lines a="r" /></Sq>
                <Sq><XBlock kind={0} /></Sq><Sq on><XBlock kind={1} /></Sq><Sq><XBlock kind={2} /></Sq>
              </div>
              <div className="ml-[4px] mt-[7px] flex">
                <Sq first><S w={18} h={20}><circle cx="9" cy="10" r="6" stroke="#333" strokeWidth="1.8" /><path d="M3 18L15 2" stroke="#333" strokeWidth="1.6" /></S></Sq>
                <Sq><S w={18} h={20}><circle cx="9" cy="7" r="2.6" stroke="#333" strokeWidth="1.6" /></S></Sq>
                <Sq><S w={14} h={16}><path d="M7 1v8M2 5h10M2 14h10" stroke="#333" strokeWidth="1.6" /></S></Sq>
                <Sq><S w={16} h={22}><circle cx="8" cy="7" r="5" stroke="#333" strokeWidth="1.6" /><path d="M6 1v18h9" stroke="#333" strokeWidth="1.6" /></S></Sq>
              </div>
              <div className="ml-[4px] mt-[4px] flex">
                <Sq first><S w={12} h={12}><rect x="1.5" y="1.5" width="9" height="9" stroke="#222" strokeWidth="2" /></S></Sq>
                <Sq><S w={14} h={10}><path d="M2 2l5 5 5-5" stroke="#222" strokeWidth="2" /></S></Sq>
                <Sq><S w={16} h={10}><path d="M2 1v7h12V1" stroke="#222" strokeWidth="1.6" /></S></Sq>
                <Sq><S w={16} h={18}><path d="M1 2h14M8 2v13M3 10l5 5 5-5" stroke="#222" strokeWidth="1.6" /></S></Sq>
                <Sq><S w={22} h={22}><circle cx="8" cy="8" r="5" stroke="#222" strokeWidth="1.6" /><path d="M6 2v17h6" stroke="#222" strokeWidth="1.6" /><path d="M13 19h7" stroke="#222" strokeDasharray="1 1" /><path d="M15 1h4v3h3v4h-3v3h-4V8h-3V4h3z" fill={LB} stroke="#1f5a7a" strokeWidth=".6" /></S></Sq>
              </div>
              <div className="h-[10px]" />
            </Sec>
            <Sec>
              <div className="h-[34px] flex items-center pl-[4px] pr-[3px]">
                <div className="w-[15px] h-[15px] rounded-[3px] border border-[#777] bg-[#f8f8f8]" />
                <span className="ml-[12px] font-bold text-[13.7px] text-[#3d4550]">Dual Dimension</span>
                <span className="ml-auto flex"><Chevron /></span>
              </div>
            </Sec>
          </div>
          <div className="absolute right-[-5px] top-[382px] w-[5px] h-[37px] bg-[#f8f8f8] border-y border-r border-[#8e8e8e] flex items-center justify-center">
            <div className="w-[4px] h-[4px] rounded-full bg-[#999]" />
          </div>
        </div>

        {/* graphics */}
        <div className="flex-1 relative bg-[#c3c7d2]">
          <Canvas />
          <div className="relative h-[42px] flex items-center pl-[5px]">
            <S w={6} h={10}><path d="M0 0l6 5-6 5z" fill="#333" /></S>
            <S w={20} h={22} className="ml-[9px]"><rect x="1" y="5" width="6" height="16" rx="3" fill="#e6e6e6" stroke="#333" /><circle cx="4" cy="10" r="1.6" fill="#c8261e" /><circle cx="4" cy="16" r="1.6" fill="#3d9a34" /><path d="M7 10l4-2V2l6 2v5l3 2v8l-6 3-7-3z" fill={LB} stroke="#1f5a7a" /></S>
            <span className="ml-[5px] text-[15px] whitespace-pre">Part1  (Default&lt;&lt;Def...</span>
          </div>
          <div className="absolute right-0 top-[22px] w-[32px] border-l border-t border-[#8a8a8a]">
            <Pane on><S w={20} h={22}><path d="M1 10l9-9 9 9" stroke="#1f5a7a" strokeWidth="2" /><path d="M4 10v11h12V10" stroke="#222" /><rect x="8" y="14" width="4" height="7" stroke="#222" /></S></Pane>
            <Pane><S w={16} h={22}><path d="M1 5l3-3 2 1 2-2 2 1 3-1v18l-3 2-7 0-2-3z" fill="#f4f4f4" stroke="#333" /><path d="M4 3v18M7 3v18M10 3v18" stroke="#333" /></S></Pane>
            <Pane><S w={22} h={20}><path d="M1 18V3h7l2 2h9v3" stroke="#333" fill="#eee" /><path d="M1 18l4-10h15l-4 10z" fill="#fff" stroke="#333" /></S></Pane>
            <Pane><S w={18} h={20}><rect x="1" y="1" width="16" height="18" stroke="#1f3a50" fill="#f2f6f8" strokeWidth="1.4" /><rect x="3" y="3" width="7" height="3" fill={LB} stroke="#1f3a50" strokeWidth=".6" /><path d="M3 12h8v5H3zM6 8h2v4H6z" fill={LB} stroke="#1f3a50" strokeWidth=".6" /><path d="M13 4h2v2h-2zM13 10h2v7h-2z" fill="#888" /></S></Pane>
            <Pane><Ball s={20} /></Pane>
            <Pane><ListIc s={18} /></Pane>
            <Pane><S w={22} h={20}><path d="M2 3h13v10H8l-3 4v-4H2z" fill={LB} stroke="#1f5a7a" /><path d="M11 7h10v9h-2v3l-3-3h-5z" fill="#f4f4f4" stroke="#333" /></S></Pane>
          </div>
        </div>
      </div>

      {/* bottom tabs */}
      <div className="h-[21px] shrink-0 flex">
        <div className="w-[52px] border-b border-[#9a9a9a]" />
        <div className="w-[81px] bg-[#a2a7b8] border-t border-b border-[#555] flex">
          {["M6 3v9h-2V3zM14 3v9L8 7.5z", "M12 3v9L6 7.5z", "M7 3v9l6-4.5z", "M5 3v9l6-4.5zM13 3v9h-2V3z"].map((d) => (
            <div key={d} className="w-[20px] border-r border-[#8a8fa2] flex items-center justify-center"><S w={18} h={15}><path d={d} fill="#7d8396" /></S></div>
          ))}
        </div>
        <div className="w-[77px] bg-[#f8f8f8] border-t border-b border-[#9a9a9a] border-t-[#f8f8f8] flex items-center justify-center font-bold text-[16px]">Model</div>
        <div className="w-[88px] bg-[#d4d4d4] border border-[#9a9a9a] border-r-0 flex items-center justify-center text-[15.2px] text-[#2d3742]">3D Views</div>
        <div className="w-[145px] bg-[#d4d4d4] border border-[#9a9a9a] flex items-center justify-center text-[15.6px] text-[#2d3742]">Motion Study 1</div>
        <div className="flex-1 border-t border-b border-r border-[#9a9a9a]" />
      </div>

      {/* status */}
      <div className="h-[20px] shrink-0 flex leading-[18px] pt-[2px] text-[14.8px]">
        <div className="w-[1283px] pl-[2px] whitespace-nowrap">Set the properties of the selected dimension(s).</div>
        <div className="w-[82px]">-3.19in</div>
        <div className="w-[58px]">3.12in</div>
        <div className="w-[42px]">0in</div>
        <div className="w-[104px] border-r border-[#c8c8c8] whitespace-nowrap">Under Defined</div>
        <div className="w-[120px] pl-[11px] border-r border-[#c8c8c8] whitespace-nowrap">Editing Sketch1</div>
        <div className="w-[31px] flex justify-center border-r border-[#c8c8c8] pt-[1px] h-[16px]"><Traffic s={0.6} /></div>
        <div className="w-[71px] pl-[51px]">IPS</div>
        <div className="w-[64px] pl-[35px] pt-[5px]"><S w={6} h={4}><path d="M0 4l3-4 3 4z" fill="#444" /></S></div>
        <div className="-mt-[1px]"><S w={16} h={16}><path d="M2 5l5-4 8 8-3 5-8-4z" fill="#e0e0e0" stroke="#555" /><path d="M4 6l7 6M6 4l7 6" stroke="#555" /></S></div>
      </div>
    </div>
  );
}
